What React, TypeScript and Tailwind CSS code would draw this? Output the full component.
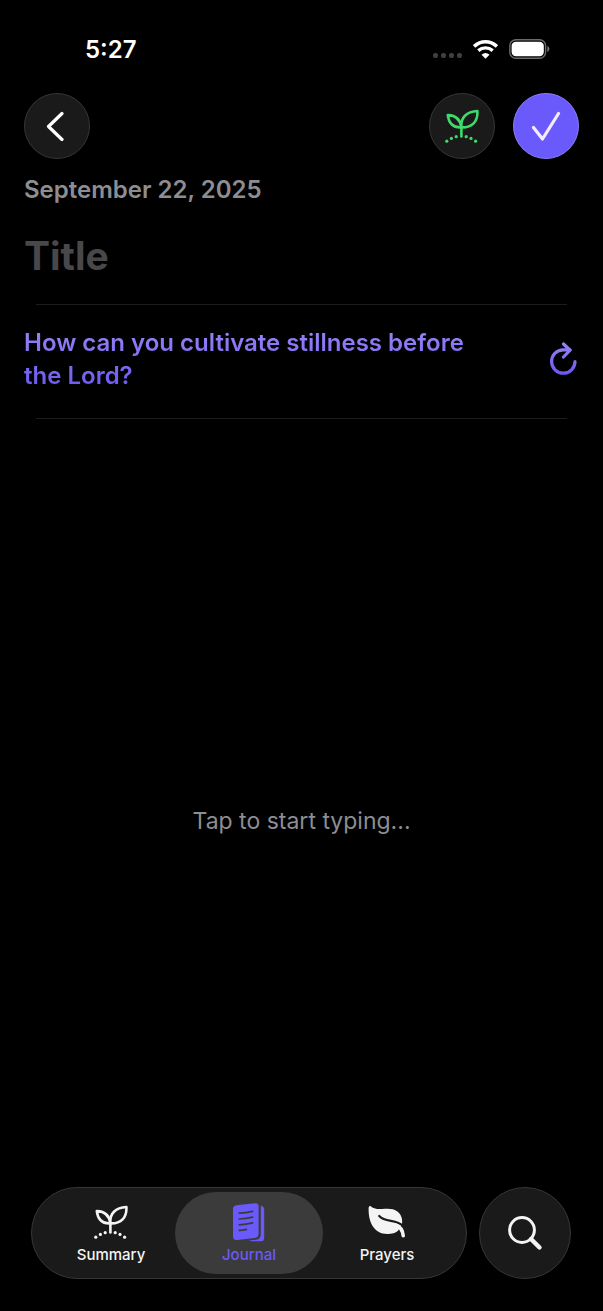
import React, { useState } from "react";

const SproutIcon = ({ className }: { className?: string }) => (
  <svg viewBox="0 0 34 34" fill="none" className={className} aria-hidden="true">
    <g stroke="currentColor" strokeWidth="2.6" strokeLinecap="round" strokeLinejoin="round">
      <path d="M16.4 27.5V18.5" />
      <path d="M16.2 18.4C8.5 18.8 3.8 14.5 2.8 6.1C10.6 6.4 15.6 10.4 16.2 18.4Z" />
      <path d="M16.4 18.4C15.4 8.8 21.6 2.4 32.4 2C33 12.8 27 18.8 16.4 18.4Z" />
    </g>
    <g fill="currentColor">
      <circle cx="1.8" cy="32.2" r="1.6" />
      <circle cx="6.4" cy="29.4" r="1.6" />
      <circle cx="11.2" cy="27.7" r="1.6" />
      <circle cx="21.2" cy="27.7" r="1.6" />
      <circle cx="26" cy="29.4" r="1.6" />
      <circle cx="30.6" cy="32.2" r="1.6" />
    </g>
  </svg>
);

const JournalIcon = ({ className }: { className?: string }) => (
  <svg viewBox="0 0 34 40" fill="none" className={className} aria-hidden="true">
    <path
      d="M4.5 3.2L23 1.2Q26.6 0.8 26.6 4.2V31.5Q26.6 35.5 22.8 36L5 38Q1 38.4 1 34.6V7Q1 3.6 4.5 3.2Z"
      fill="currentColor"
    />
    <path
      d="M28.8 3.4Q32.2 4.4 32.2 7.4V36Q32.2 39.2 29 39.2H20Q18 39.2 17.2 38.6L24 37.8Q28.8 37.2 28.8 32Z"
      fill="currentColor"
    />
    <g stroke="#3b3b3b" strokeWidth="1.7" strokeLinecap="round">
      <path d="M7.2 11.2Q14 10.8 20.6 9.3" />
      <path d="M7.2 17Q14 16.6 20.6 15.1" />
      <path d="M7.2 22.8Q14 22.4 20.6 20.9" />
      <path d="M7.2 28.4Q11 28.2 14.4 27.4" />
    </g>
  </svg>
);

const LeafIcon = ({ className }: { className?: string }) => (
  <svg viewBox="0 0 38 34" fill="none" className={className} aria-hidden="true">
    <path
      d="M2.4 1C1 0.4 0.6 2.2 0.6 4C0.4 18 6.6 29 19.4 29C24 29 27.6 28 30 25.8L34 19.6C34.8 14 33.4 9.4 29.4 6.4C25.6 3.4 20.2 3.4 14 4C9 4.4 5.2 3.6 2.4 1Z"
      fill="currentColor"
    />
    <path
      d="M11.2 11C17.4 18 28.6 13.6 35 21"
      stroke="#1a1a1a"
      strokeWidth="2.2"
      strokeLinecap="round"
    />
    <path
      d="M27.6 20C32.4 21.6 34.6 25 35.2 30.6"
      stroke="currentColor"
      strokeWidth="3.6"
      strokeLinecap="round"
    />
  </svg>
);

const StatusBar = () => (
  <div className="flex h-[93px] items-start justify-between pt-8 pr-[53px] pl-[85px]">
    <span className="text-2xl leading-9 font-semibold">5:27</span>
    <div className="flex h-[34px] items-center">
      <div className="mt-3 mr-[11px] flex gap-[3px]">
        {[1, 2, 3, 4].map((dot) => (
          <span key={dot} className="size-[5px] rounded-xs bg-[#3f3f3f]"></span>
        ))}
      </div>
      <svg width="25" height="19" viewBox="0 0 25 19" fill="none" className="mr-[11px]" aria-hidden="true">
        <g stroke="currentColor" strokeWidth="3.4">
          <path d="M1.1 6.4Q6.2 1.7 12.5 1.7T23.9 6.4" />
          <path d="M5.3 10.6Q8.4 7.9 12.5 7.9T19.7 10.6" />
        </g>
        <path d="M12.5 18.8L8.5 14.7Q12.5 11.2 16.5 14.7Z" fill="currentColor" />
      </svg>
      <svg width="41" height="20" viewBox="0 0 41 20" fill="none" aria-hidden="true">
        <rect x="0.8" y="0.8" width="35.8" height="18.4" rx="6" stroke="#6b6b6b" strokeWidth="1.4" />
        <rect x="2.6" y="2.8" width="32.2" height="14.4" rx="4.2" fill="currentColor" />
        <path d="M38.4 7Q40.4 8 40.4 10T38.4 13Z" fill="#7a7a7a" />
      </svg>
    </div>
  </div>
);

const App = () => {
  const [title, setTitle] = useState("");
  const [active, setActive] = useState("journal");

  const tabs = [
    { id: "summary", name: "Summary", icon: <SproutIcon className="h-[34px] w-[34px]" /> },
    { id: "journal", name: "Journal", icon: <JournalIcon className="h-10 w-[34px]" /> },
    { id: "prayers", name: "Prayers", icon: <LeafIcon className="h-[34px] w-[38px]" /> }
  ];

  return (
    <div className="flex min-h-screen flex-col bg-black font-['Inter','Liberation_Sans',sans-serif] text-white">
      <StatusBar />

      {/* Toolbar */}
      <header className="flex items-center justify-between px-6">
        <button
          aria-label="Back"
          className="flex size-[66px] items-center justify-center rounded-full border border-[#363636] bg-[#1a1a1a]"
        >
          <svg width="20" height="30" viewBox="0 0 20 30" fill="none" className="mr-1" aria-hidden="true">
            <path
              d="M17 2.5L3.5 15.5L17 28.5"
              stroke="currentColor"
              strokeWidth="3.2"
              strokeLinecap="round"
              strokeLinejoin="round"
            />
          </svg>
        </button>
        <div className="flex gap-[18px]">
          <button
            aria-label="Grow"
            className="flex size-[66px] items-center justify-center rounded-full border border-[#363636] bg-[#1a1a1a] text-[#3edb6c]"
          >
            <SproutIcon className="size-[34px]" />
          </button>
          <button
            aria-label="Done"
            className="flex size-[66px] items-center justify-center rounded-full border border-[#8b7cf8] bg-[#6a5afb] text-[#f6eaff]"
          >
            <svg width="30" height="30" viewBox="0 0 30 30" fill="none" aria-hidden="true">
              <path
                d="M2.5 16.5L11.5 28L27.5 2.5"
                stroke="currentColor"
                strokeWidth="3.2"
                strokeLinecap="round"
                strokeLinejoin="round"
              />
            </svg>
          </button>
        </div>
      </header>

      {/* Entry */}
      <main className="flex flex-1 flex-col">
        <p className="mt-4 px-6 text-2xl leading-[30px] font-semibold text-[#8d8d92]">
          September 22, 2025
        </p>
        <input
          type="text"
          aria-label="Title"
          placeholder="Title"
          value={title}
          onChange={(e) => setTitle(e.target.value)}
          className="mt-6 h-[54px] w-full bg-transparent px-6 text-[39px] font-bold outline-none placeholder:text-[#48484a]"
        />
        <hr className="mx-9 mt-[21px] border-[#1c1c1d]" />
        <div className="flex items-center justify-between px-6 pt-[21px] pb-5">
          <p className="max-w-[470px] bg-gradient-to-b from-[#9a85f5] to-[#6a55f2] bg-clip-text text-2xl leading-[33px] font-semibold text-transparent">
            How can you cultivate stillness before the Lord?
          </p>
          <button aria-label="New question" className="shrink-0">
            <svg width="30" height="34" viewBox="0 0 30 34" fill="none" aria-hidden="true">
              <defs>
                <linearGradient id="reload" x1="0" y1="0" x2="0" y2="34" gradientUnits="userSpaceOnUse">
                  <stop stopColor="#9a85f5" />
                  <stop offset="1" stopColor="#6a55f2" />
                </linearGradient>
              </defs>
              <g stroke="url(#reload)" strokeWidth="3.2" strokeLinecap="round" strokeLinejoin="round">
                <path d="M26 19.5A11.7 11.7 0 1 1 14.3 7.8H21" />
                <path d="M14.5 2L21 8.2L14.5 15" />
              </g>
            </svg>
          </button>
        </div>
        <hr className="mx-9 mt-1.5 border-[#1c1c1d]" />
        <button className="flex flex-1 items-center justify-center pt-9 text-[23px] text-[#8d8d92]">
          Tap to start typing...
        </button>
      </main>

      {/* Bottom navigation */}
      <footer className="flex gap-3 pr-8 pb-8 pl-[31px]">
        <nav className="flex h-[92px] flex-1 rounded-full border border-[#363636] bg-[#1a1a1a] px-[10px] py-1">
          {tabs.map((tab) => (
            <div key={tab.id} className="flex flex-1">
              <a
                href={`#${tab.id}`}
                onClick={() => setActive(tab.id)}
                className={`-mx-[5px] flex flex-1 flex-col items-center rounded-full pt-2.5 ${
                  active === tab.id ? "bg-[#3b3b3b] text-[#6a5afb]" : "text-[#f4f4f4]"
                }`}
              >
                <span className="flex h-10 items-center">{tab.icon}</span>
                <span className="mt-[3px] text-[15px] leading-5 font-medium">{tab.name}</span>
              </a>
            </div>
          ))}
        </nav>
        <button
          aria-label="Search"
          className="flex size-[92px] items-center justify-center rounded-full border border-[#363636] bg-[#1a1a1a] text-[#f4f4f4]"
        >
          <svg width="36" height="36" viewBox="0 0 36 36" fill="none" aria-hidden="true">
            <circle cx="15" cy="15" r="12.4" stroke="currentColor" strokeWidth="3" />
            <path d="M24 24L32.5 32.5" stroke="currentColor" strokeWidth="4.4" strokeLinecap="round" />
          </svg>
        </button>
      </footer>
    </div>
  );
};

export default App;
